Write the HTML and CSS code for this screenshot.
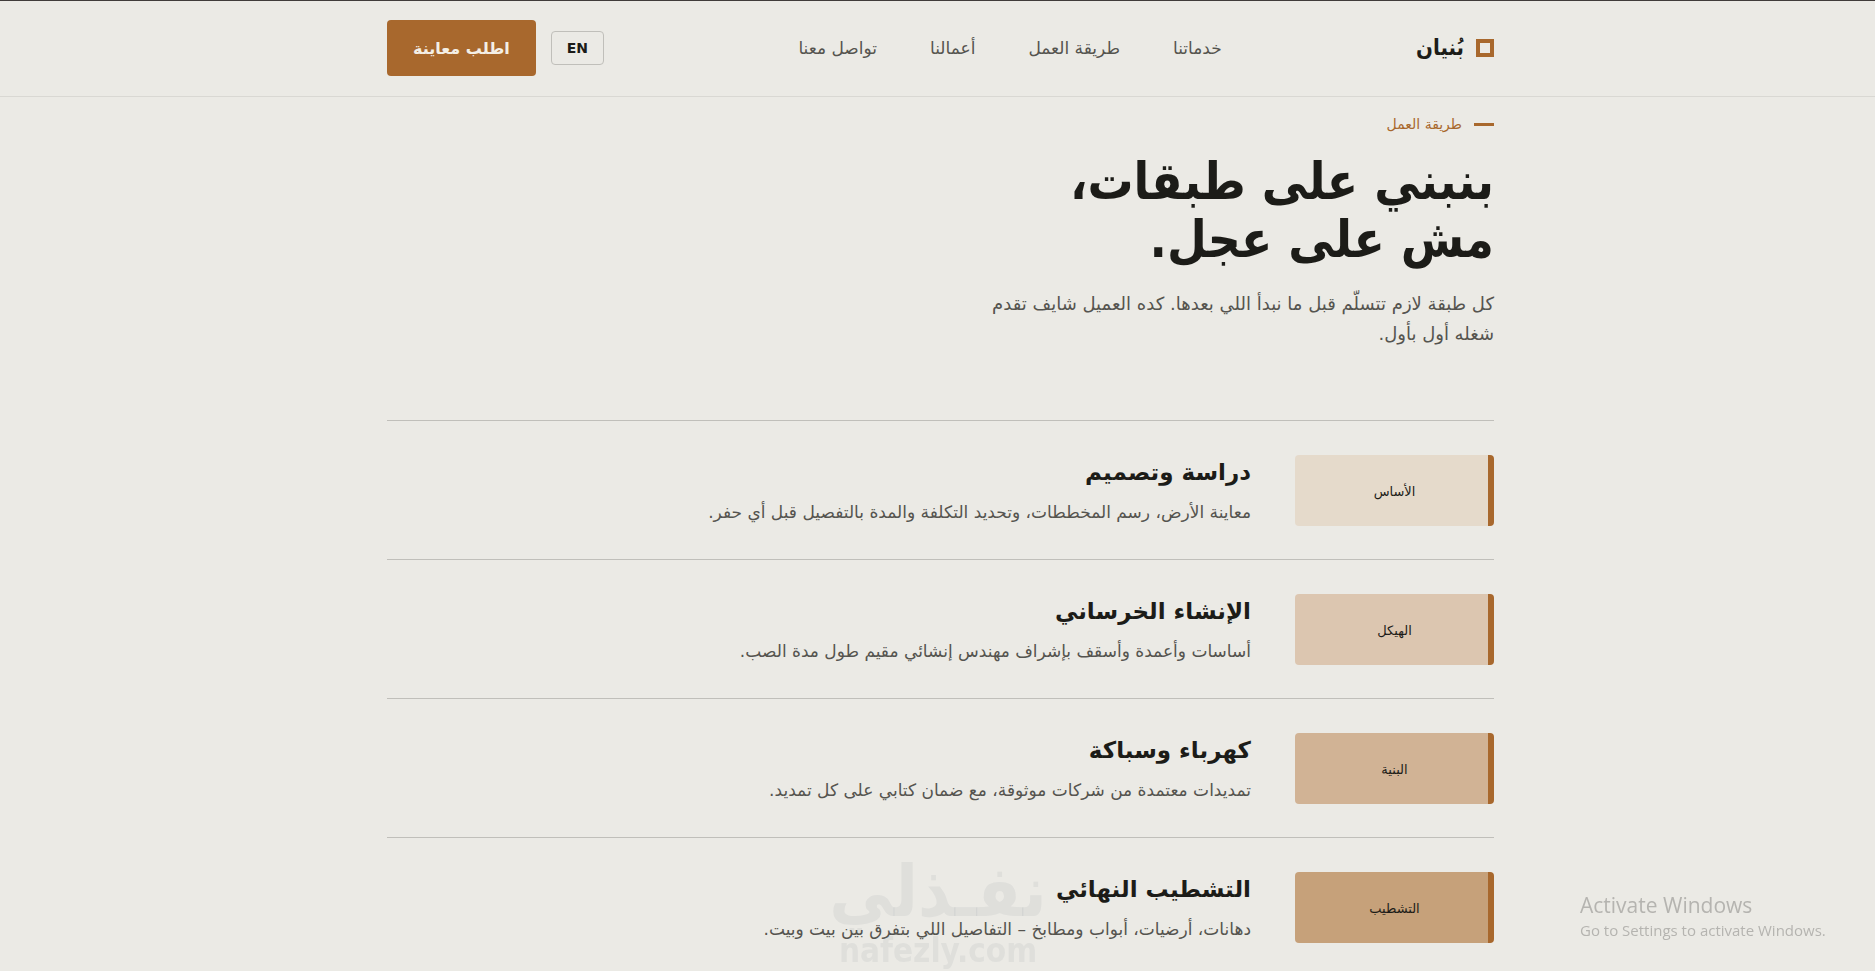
FILE: index.html
```html
<!DOCTYPE html>
<html lang="ar" dir="rtl">

<head>
    <meta charset="UTF-8">
    <meta name="viewport" content="width=device-width, initial-scale=1.0">
    <title>بُنيان</title>
    <link rel="stylesheet" href="styles.css">
</head>

<body>
    <header class="header">
        <div class="container header-inner">
            <a class="logo" href="#"><span class="logo-mark"></span>بُنيان</a>
            <nav class="nav">
                <a href="#services">خدماتنا</a>
                <a href="#process">طريقة العمل</a>
                <a href="#work">أعمالنا</a>
                <a href="#contact">تواصل معنا</a>
            </nav>
            <div class="actions">
                <button class="lang" type="button">EN</button>
                <button class="cta" type="button">اطلب معاينة</button>
            </div>
        </div>
    </header>

    <main class="process" id="process">
        <div class="container">
            <p class="eyebrow">طريقة العمل</p>
            <h1>بنبني على طبقات،<br>مش على عجل.</h1>
            <p class="lead">كل طبقة لازم تتسلّم قبل ما نبدأ اللي بعدها. كده العميل شايف تقدم شغله أول بأول.</p>

            <div class="steps">
                <div class="step">
                    <div class="layer layer-1">الأساس</div>
                    <div class="step-text">
                        <h2>دراسة وتصميم</h2>
                        <p>معاينة الأرض، رسم المخططات، وتحديد التكلفة والمدة بالتفصيل قبل أي حفر.</p>
                    </div>
                </div>
                <div class="step">
                    <div class="layer layer-2">الهيكل</div>
                    <div class="step-text">
                        <h2>الإنشاء الخرساني</h2>
                        <p>أساسات وأعمدة وأسقف بإشراف مهندس إنشائي مقيم طول مدة الصب.</p>
                    </div>
                </div>
                <div class="step">
                    <div class="layer layer-3">البنية</div>
                    <div class="step-text">
                        <h2>كهرباء وسباكة</h2>
                        <p>تمديدات معتمدة من شركات موثوقة، مع ضمان كتابي على كل تمديد.</p>
                    </div>
                </div>
                <div class="step">
                    <div class="layer layer-4">التشطيب</div>
                    <div class="step-text">
                        <h2>التشطيب النهائي</h2>
                        <p>دهانات، أرضيات، أبواب ومطابخ – التفاصيل اللي بتفرق بين بيت وبيت.</p>
                    </div>
                </div>
            </div>
        </div>
    </main>

    <div class="watermark">
        <span class="watermark-name">نفـذلي</span>
        <span class="watermark-url">nafezly.com</span>
    </div>

    <div class="activate" dir="ltr">
        <span class="activate-title">Activate Windows</span>
        <span>Go to Settings to activate Windows.</span>
    </div>
</body>

</html>
```

FILE: styles.css
```css
* {
    box-sizing: border-box;
}

html {
    overflow: hidden;
}

body {
    margin: 0;
    background-color: #ebeae5;
    color: #1c1c18;
    font-family: "DejaVu Sans", sans-serif;
    border-top: 1px solid #403c3a;
}

h1,
h2,
p {
    margin: 0;
}

a {
    color: inherit;
    text-decoration: none;
}

button {
    font-family: inherit;
    cursor: pointer;
}

.container {
    max-width: 1107px;
    margin: 0 auto;
}

.header {
    padding: 19px 0 20px 6px;
    border-bottom: 1px solid #d9d8d3;
}

.header-inner {
    display: flex;
    align-items: center;
    justify-content: space-between;
}

.logo {
    display: flex;
    align-items: center;
    gap: 12px;
    font-family: "DejaVu Sans Condensed", "DejaVu Sans", sans-serif;
    font-size: 22px;
    line-height: 32px;
    font-weight: bold;
}

.logo-mark {
    width: 18px;
    height: 18px;
    border: 4px solid #a8682d;
}

.nav {
    display: flex;
    gap: 53px;
    font-size: 17px;
    color: #55544f;
}

.actions {
    display: flex;
    align-items: center;
    gap: 15px;
}

.lang {
    height: 34px;
    padding: 0 15px;
    border: 1px solid #c0bfba;
    border-radius: 4px;
    background: none;
    color: #1c1c18;
    font-size: 14px;
    font-weight: bold;
}

.cta {
    height: 56px;
    padding: 0 26px;
    border: none;
    border-radius: 4px;
    background-color: #a8682d;
    color: #f4efe6;
    font-size: 16px;
    font-weight: bold;
}

.process {
    padding-top: 16px;
    padding-left: 6px;
}

.eyebrow {
    display: flex;
    align-items: center;
    gap: 12px;
    color: #a8682d;
    font-size: 14px;
    line-height: 22px;
}

.eyebrow::before {
    content: "";
    width: 20px;
    height: 3px;
    background-color: #a8682d;
}

h1 {
    margin-top: 18px;
    font-family: "DejaVu Sans Condensed", "DejaVu Sans", sans-serif;
    font-size: 51px;
    line-height: 58px;
}

.lead {
    max-width: 520px;
    margin-top: 20px;
    color: #55544f;
    font-size: 18px;
    line-height: 30px;
}

.steps {
    margin-top: 71px;
}

.step {
    display: grid;
    grid-template-columns: 199px 1fr;
    gap: 44px;
    align-items: center;
    padding: 34px 0 33px;
    border-top: 1px solid #c0bfba;
}

.layer {
    display: flex;
    align-items: center;
    justify-content: center;
    height: 71px;
    padding: 2px 0 0 6px;
    border-right: 6px solid #a8682d;
    border-radius: 4px;
    font-size: 13px;
}

.layer-1 {
    background-color: #e5dacb;
}

.layer-2 {
    background-color: #dcc6b0;
}

.layer-3 {
    background-color: #d1b395;
}

.layer-4 {
    background-color: #c6a17a;
}

.step-text h2 {
    font-size: 23px;
    line-height: 35px;
}

.step-text p {
    margin-top: 8px;
    color: #55544f;
    font-size: 17px;
    line-height: 28px;
}

.watermark {
    position: fixed;
    left: 832px;
    bottom: 0;
    display: flex;
    flex-direction: column;
    align-items: center;
    width: 212px;
    color: rgba(120, 125, 140, 0.1);
    font-family: "DejaVu Sans Condensed", "DejaVu Sans", sans-serif;
    font-weight: bold;
}

.watermark-name {
    font-size: 71px;
    line-height: 78px;
}

.watermark-url {
    font-size: 33px;
    line-height: 40px;
}

.activate {
    position: fixed;
    left: 1580px;
    bottom: 30px;
    display: flex;
    flex-direction: column;
    color: #b5b4b0;
    font-family: "Open Sans", sans-serif;
    font-size: 15px;
    line-height: 22px;
}

.activate-title {
    font-size: 21px;
    line-height: 28px;
}
```
